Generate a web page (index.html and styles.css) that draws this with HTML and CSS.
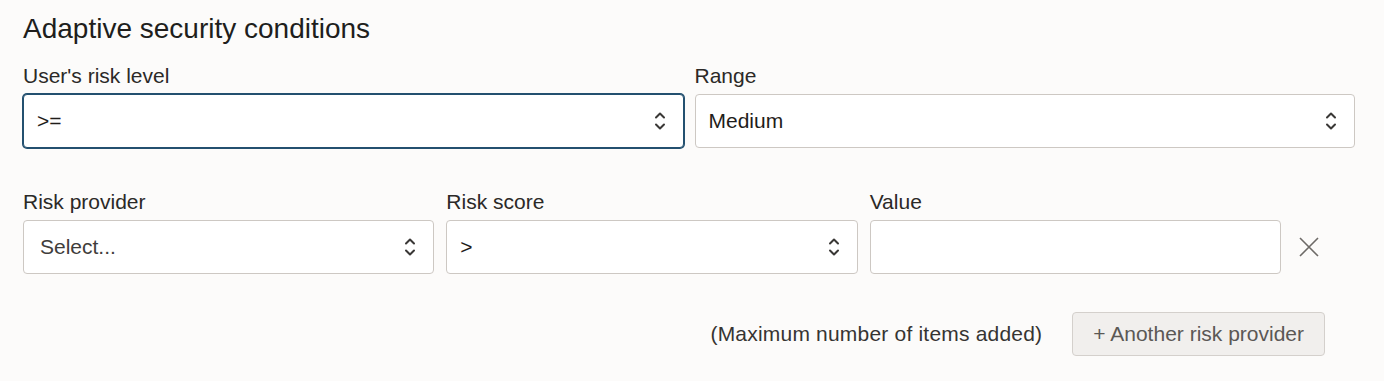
FILE: index.html
```html
<!doctype html>
<html lang="en">
  <head>
    <meta charset="UTF-8" />
    <meta name="viewport" content="width=device-width, initial-scale=1.0" />
    <title>Adaptive security conditions</title>
    <link rel="stylesheet" href="styles.css">
  </head>
  <body>
    <div class="wrapper">
      <h2 class="section_title">Adaptive security conditions</h2>

      <div class="level_row">
        <div class="field_div_container">
          <label>User's risk level</label>
          <div class="select_box focused">
            <span>&gt;=</span>
            <svg class="chevrons" viewBox="0 0 12 20"><path d="M2 6.5 6 2.5 10 6.5M2 13.5 6 17.5 10 13.5" /></svg>
          </div>
        </div>
        <div class="field_div_container">
          <label>Range</label>
          <div class="select_box">
            <span>Medium</span>
            <svg class="chevrons" viewBox="0 0 12 20"><path d="M2 6.5 6 2.5 10 6.5M2 13.5 6 17.5 10 13.5" /></svg>
          </div>
        </div>
      </div>

      <div class="provider_row">
        <div class="field_div_container">
          <label>Risk provider</label>
          <div class="select_box">
            <span class="placeholder">Select...</span>
            <svg class="chevrons" viewBox="0 0 12 20"><path d="M2 6.5 6 2.5 10 6.5M2 13.5 6 17.5 10 13.5" /></svg>
          </div>
        </div>
        <div class="field_div_container">
          <label>Risk score</label>
          <div class="select_box">
            <span>&gt;</span>
            <svg class="chevrons" viewBox="0 0 12 20"><path d="M2 6.5 6 2.5 10 6.5M2 13.5 6 17.5 10 13.5" /></svg>
          </div>
        </div>
        <div class="field_div_container">
          <label for="scoreValue">Value</label>
          <input id="scoreValue" class="text_input" type="text" />
        </div>
        <div class="remove_div_container">
          <svg class="remove_icon" viewBox="0 0 22 22"><path d="M2 2 20 20M20 2 2 20" /></svg>
        </div>
      </div>

      <div class="actions_row">
        <span class="limit_note">(Maximum number of items added)</span>
        <button class="add_button" disabled>+ Another risk provider</button>
      </div>
    </div>
  </body>
</html>
```

FILE: styles.css
```css
:root {
  --font-family-base: "Liberation Sans", Arial, sans-serif;
  --text-color: #1f1d1b;
  --label-color: #2b2927;
  --border-color: #cdc8c3;
  --focus-color: #23506f;
  --page-bg: #fcfbfa;
}

body {
  margin: 0;
  background-color: var(--page-bg);
  font-family: var(--font-family-base);
  color: var(--text-color);
}

.wrapper {
  padding: 13px 29px 0 23px;
}

.section_title {
  margin: 0;
  font-size: 28px;
  line-height: 32px;
  font-weight: 400;
  color: #201e1c;
}

/* rows */
.level_row {
  display: grid;
  grid-template-columns: 1fr 1fr;
  gap: 11px;
  margin-top: 19px;
}
.provider_row {
  display: grid;
  grid-template-columns: 1fr 1fr 1fr 62px;
  gap: 12px;
  margin-top: 42px;
}

.field_div_container {
  display: flex;
  flex-direction: column;
  gap: 6px;
}
.field_div_container label {
  font-size: 21px;
  line-height: 24px;
  color: var(--label-color);
}

.select_box {
  display: flex;
  align-items: center;
  justify-content: space-between;
  height: 54px;
  box-sizing: border-box;
  padding: 0 17px 0 13px;
  border: 1px solid var(--border-color);
  border-radius: 4px;
  background-color: #fff;
  font-size: 21px;
  color: var(--text-color);
}
.select_box.focused {
  border-color: var(--focus-color);
  box-shadow: 0 0 0 1px var(--focus-color);
}
.select_box .placeholder {
  padding-left: 3px;
  color: #3f3d3b;
}

.chevrons {
  width: 12px;
  height: 20px;
  fill: none;
  stroke: #3a3836;
  stroke-width: 2;
  stroke-linecap: round;
  stroke-linejoin: round;
}

.text_input {
  height: 54px;
  box-sizing: border-box;
  border: 1px solid var(--border-color);
  border-radius: 4px;
  background-color: #fff;
  font: 21px var(--font-family-base);
  padding: 0 13px;
  outline: none;
}

.remove_div_container {
  display: flex;
  align-items: flex-end;
  padding: 0 0 16px 5px;
}
.remove_icon {
  width: 22px;
  height: 22px;
  fill: none;
  stroke: #6d6a67;
  stroke-width: 1.6;
}

/* footer */
.actions_row {
  display: flex;
  justify-content: flex-end;
  align-items: center;
  gap: 30px;
  margin-top: 38px;
  padding-right: 30px;
}
.limit_note {
  font-size: 21px;
  letter-spacing: 0.2px;
  color: #363432;
}
.add_button {
  height: 44px;
  padding: 0 20px;
  border: 1px solid #d4d0cc;
  border-radius: 4px;
  background-color: #f1efed;
  font: 21px var(--font-family-base);
  color: #5b5855;
}
```
